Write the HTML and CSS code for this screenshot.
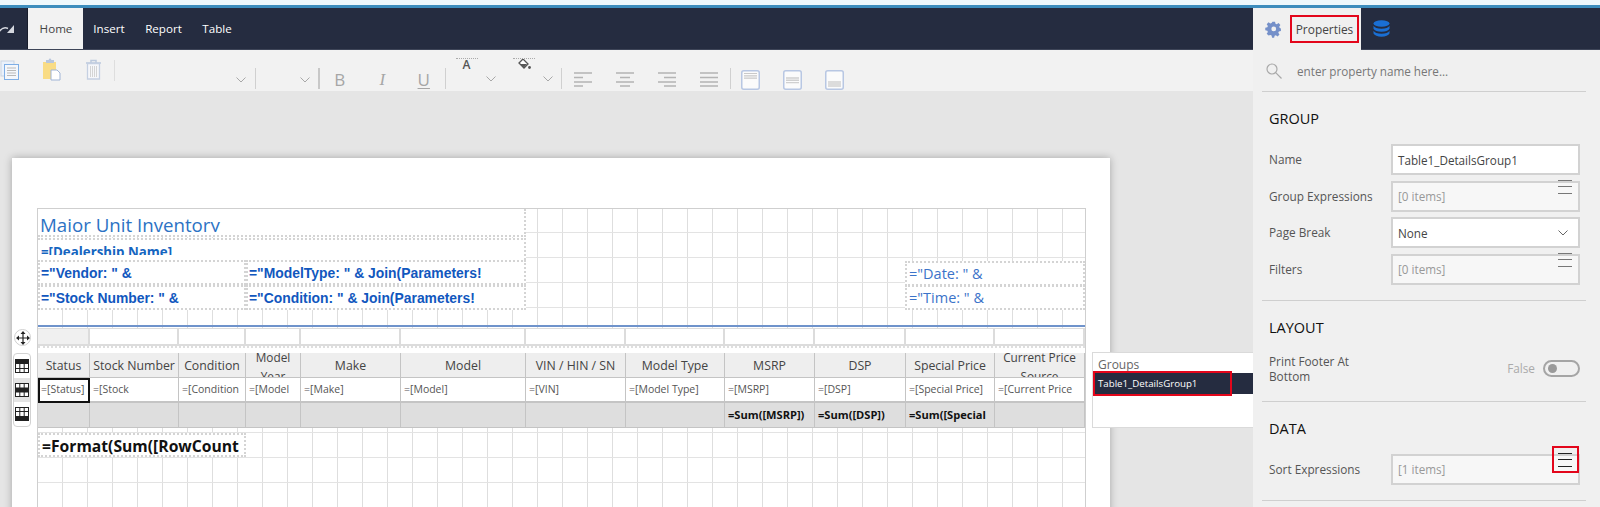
FILE: index.html
```html
<!DOCTYPE html>
<html lang="en">
<head>
<meta charset="utf-8">
<title>Report Designer</title>
<link rel="stylesheet" href="styles.css">
</head>
<body>
<div class="strip"></div>
<header class="nav">
  <div class="nav-left">
    <span class="redo"><svg width="16" height="12" viewBox="0 0 16 12"><path d="M0 9Q4 3 9 5.500" fill="none" stroke="#d5d8df" stroke-width="1.400"/><path d="M15 2v8H8z" fill="#d5d8df"/></svg></span>
    <span class="tab tab-home">Home</span>
    <span class="tab">Insert</span>
    <span class="tab">Report</span>
    <span class="tab">Table</span>
  </div>
  <div class="nav-right">
    <div class="prop-tab">
      <svg class="gear" width="17" height="17" viewBox="0 0 24 24"><path fill="#7590c9" d="M10 1h4l.7 3.200 1.900.8 2.800-1.800 2.800 2.800-1.800 2.800.8 1.900L23 11.400v4l-3.200.7-.8 1.900 1.800 2.800-2.800 2.800-2.800-1.800-1.900.8-.7 3H9.400l-.7-3.200-1.900-.8L4 22.400 1.200 19.600 3 16.800l-.8-1.900L-1 14.200v-4l3.200-.7.8-1.900L1.200 4.800 4 2 6.800 3.800 8.700 3zM12 8.500a3.700 3.700 0 1 0 0 7.400 3.700 3.700 0 0 0 0-7.400z" transform="translate(1.300 0) scale(.92)"/></svg>
      <span class="prop-label">Properties</span>
    </div>
    <svg class="db" width="17" height="17" viewBox="0 0 17 17"><g fill="#1a6fd4"><ellipse cx="8.500" cy="3.500" rx="8" ry="3.300"/><path d="M.5 5.800c1 2 4 3 8 3s7-1 8-3v3c-1 2-4 3-8 3s-7-1-8-3z"/><path d="M.5 10.800c1 2 4 3 8 3s7-1 8-3v2.700c-1 2-4 3.200-8 3.200s-7-1.200-8-3.200z"/></g></svg>
  </div>
</header>
<div class="main">
  <div class="work">
    <div class="toolbar">
      <div class="cell up first"><svg width="19" height="20" viewBox="0 0 19 20"><rect x="1" y="1" width="13" height="15" fill="#eaf1fb" stroke="#c9d3e2"/><rect x="4.500" y="4.500" width="14" height="15" fill="#f4f7fc" stroke="#7eaee6"/><path d="M7 8h9M7 10.500h9M7 13h9M7 15.500h9" stroke="#b9b9b9"/></svg></div>
      <div class="cell up"><svg width="19" height="23" viewBox="0 0 19 23"><path d="M1 4h13v17H1z" fill="#f9dc85"/><path d="M4 4V2h2.500l1-1.500h1l1 1.500H12v3H4z" fill="#b8c6dd"/><path d="M9 12h6l3 3v7H9z" fill="#fff" stroke="#9fb4d6"/></svg></div>
      <div class="cell up"><svg width="17" height="21" viewBox="0 0 17 21"><path d="M1 4h15M6 4V1.500h5V4" fill="none" stroke="#bcc9dd" stroke-width="1.500"/><path d="M2.500 4.500h12V20h-12z" fill="#f6f7fa" stroke="#c5d0e2" stroke-width="1.300"/><path d="M5.500 7v11M7.500 7v11M9.500 7v11M11.500 7v11" stroke="#d4d4d4"/></svg></div>
      <div class="sep sep-top"></div>
      <div class="cell low dd dd-font"><svg class="chev" width="10" height="6" viewBox="0 0 10 6"><path d="M.5.500 5 5 9.500.500" fill="none" stroke="#a8a8a8"/></svg></div>
      <div class="sep"></div>
      <div class="cell low dd dd-size"><svg class="chev" width="10" height="6" viewBox="0 0 10 6"><path d="M.5.500 5 5 9.500.500" fill="none" stroke="#a8a8a8"/></svg></div>
      <div class="sep sep-wide"></div>
      <div class="cell low fmt fmt-b">B</div>
      <div class="cell low fmt fmt-i">I</div>
      <div class="cell low fmt fmt-u">U</div>
      <div class="sep"></div>
      <div class="colorbtn">
        <span class="swatch">A</span>
        <svg class="chev chev-color" width="10" height="6" viewBox="0 0 10 6"><path d="M.5.500 5 5 9.500.500" fill="none" stroke="#a8a8a8"/></svg>
      </div>
      <div class="colorbtn">
        <span class="swatch"><svg width="13" height="11" viewBox="0 0 13 11"><path d="M5 0l5 5-4 4-5-5z" fill="#fff" stroke="#555" stroke-width="1.300"/><path d="M2 5h7L6 8.500z" fill="#555"/><circle cx="11.500" cy="8.500" r="1.400" fill="#555"/></svg></span>
        <svg class="chev chev-color" width="10" height="6" viewBox="0 0 10 6"><path d="M.5.500 5 5 9.500.500" fill="none" stroke="#a8a8a8"/></svg>
      </div>
      <div class="sep"></div>
      <div class="cell low"><svg width="18" height="15" viewBox="0 0 18 15"><path d="M0 1h18M0 5.500h9M0 10h18M0 14h9" stroke="#b4b4b4" stroke-width="1.500"/></svg></div>
      <div class="cell low"><svg width="18" height="15" viewBox="0 0 18 15"><path d="M0 1h18M4 5.500h10M0 10h18M4 14h10" stroke="#b4b4b4" stroke-width="1.500"/></svg></div>
      <div class="cell low"><svg width="18" height="15" viewBox="0 0 18 15"><path d="M0 1h18M6 5.500h12M0 10h18M6 14h12" stroke="#b4b4b4" stroke-width="1.500"/></svg></div>
      <div class="cell low"><svg width="18" height="15" viewBox="0 0 18 15"><path d="M0 1h18M0 5.500h18M0 10h18M0 14h18" stroke="#b4b4b4" stroke-width="1.500"/></svg></div>
      <div class="sep sep-last"></div>
      <div class="cell low"><svg width="19" height="20" viewBox="0 0 19 20"><rect x=".75" y=".75" width="17.500" height="18.500" rx="2" fill="#fbfbfb" stroke="#b8c7e3" stroke-width="1.500"/><path d="M3 3.500h13M3 5.800h13M3 8.100h13" stroke="#c9c9c9" stroke-width="1.200"/></svg></div>
      <div class="cell low"><svg width="19" height="20" viewBox="0 0 19 20"><rect x=".75" y=".75" width="17.500" height="18.500" rx="2" fill="#fbfbfb" stroke="#b8c7e3" stroke-width="1.500"/><path d="M3 8h13M3 10.300h13M3 12.600h13" stroke="#d0d0d0" stroke-width="1.400"/></svg></div>
      <div class="cell low"><svg width="19" height="20" viewBox="0 0 19 20"><rect x=".75" y=".75" width="17.500" height="18.500" rx="2" fill="#fbfbfb" stroke="#b8c7e3" stroke-width="1.500"/><path d="M3 11h13v6H3z" fill="#dcdcdc"/></svg></div>
    </div>
    <div class="canvas">
      <div class="page">
        <div class="surface">
          <div class="item it-title"><span class="clip clip-title">Major Unit Inventory</span></div>
          <div class="item it-dealer"><span class="clip clip-dealer">=[Dealership Name]</span></div>
          <div class="item it-bold it-vendor">="Vendor: " &amp;</div>
          <div class="item it-bold it-modeltype">="ModelType: " &amp; Join(Parameters!</div>
          <div class="item it-bold it-stock">="Stock Number: " &amp;</div>
          <div class="item it-bold it-condition">="Condition: " &amp; Join(Parameters!</div>
          <div class="item it-date it-date1">="Date: " &amp;</div>
          <div class="item it-date it-date2">="Time: " &amp;</div>
          <div class="section-line"></div>
          <div class="col-handles">
            <i class="grey"></i><i></i><i></i><i></i><i></i><i></i><i></i><i></i><i></i><i></i><i></i><i></i>
          </div>
          <div class="dots-line"></div>
          <div class="rtable">
            <div class="c h">Status</div><div class="c h">Stock Number</div><div class="c h">Condition</div><div class="c h two">Model Year</div><div class="c h">Make</div><div class="c h">Model</div><div class="c h">VIN / HIN / SN</div><div class="c h">Model Type</div><div class="c h">MSRP</div><div class="c h">DSP</div><div class="c h">Special Price</div><div class="c h two">Current Price Source</div>
            <div class="c d sel">=[Status]</div><div class="c d">=[Stock<br>Number]</div><div class="c d">=[Condition<br>]</div><div class="c d">=[Model<br>Year]</div><div class="c d">=[Make]</div><div class="c d">=[Model]</div><div class="c d">=[VIN]</div><div class="c d">=[Model Type]</div><div class="c d">=[MSRP]</div><div class="c d">=[DSP]</div><div class="c d">=[Special Price]</div><div class="c d">=[Current Price<br>Source]</div>
            <div class="c f"></div><div class="c f"></div><div class="c f"></div><div class="c f"></div><div class="c f"></div><div class="c f"></div><div class="c f"></div><div class="c f"></div><div class="c f">=Sum([MSRP])</div><div class="c f">=Sum([DSP])</div><div class="c f">=Sum([Special<br>Price])</div><div class="c f"></div>
          </div>
          <div class="item it-format">=Format(Sum([RowCount</div>
        </div>
      </div>
      <div class="move-btn"><svg width="14" height="14" viewBox="0 0 14 14"><path d="M7 0 9.500 3h-5zM7 14 4.500 11h5zM0 7l3-2.500v5zM14 7l-3 2.500v-5z" fill="#222"/><path d="M7 2v10M2 7h10" stroke="#222" stroke-width="1.200"/></svg></div>
      <div class="row-btns">
        <span class="row-btn"><svg width="14" height="14" viewBox="0 0 14 14"><rect x=".5" y=".5" width="13" height="13" fill="#fff" stroke="#222"/><rect x="0" y="0" width="14" height="5" fill="#222"/><path d="M0 9.500h14M4.800 5v9M9.200 5v9" stroke="#222"/></svg></span>
        <span class="row-btn row-btn-on"><svg width="14" height="14" viewBox="0 0 14 14"><rect x=".5" y=".5" width="13" height="13" fill="#fff" stroke="#222"/><rect x="0" y="4.500" width="14" height="5" fill="#222"/><path d="M4.800 0v14M9.200 0v14" stroke="#222"/></svg></span>
        <span class="row-btn"><svg width="14" height="14" viewBox="0 0 14 14"><rect x=".5" y=".5" width="13" height="13" fill="#fff" stroke="#222"/><rect x="0" y="9" width="14" height="5" fill="#222"/><path d="M0 4.500h14M4.800 0v9M9.200 0v9" stroke="#222"/></svg></span>
      </div>
      <div class="groups">
        <div class="groups-title">Groups</div>
        <div class="groups-row"><span class="groups-name">Table1_DetailsGroup1</span></div>
      </div>
    </div>
  </div>
  <aside class="panel">
    <div class="search">
      <svg width="16" height="16" viewBox="0 0 16 16"><circle cx="6" cy="6" r="5" fill="none" stroke="#a9a9a9" stroke-width="1.200"/><path d="M9.700 9.700 15.500 15.500" stroke="#a9a9a9" stroke-width="1.200"/></svg>
      <span class="search-text">enter property name here...</span>
    </div>
    <section class="sec">
      <h2 class="sec-title">GROUP</h2>
      <div class="row"><label class="lbl">Name</label><div class="inp">Table1_DetailsGroup1</div></div>
      <div class="row"><label class="lbl">Group Expressions</label><div class="inp inp-off">[0 items]<span class="burger"><i></i><i></i><i></i></span></div></div>
      <div class="row"><label class="lbl">Page Break</label><div class="inp">None<svg class="sel-chev" width="10" height="6" viewBox="0 0 10 6"><path d="M.5.500 5 5 9.500.500" fill="none" stroke="#666"/></svg></div></div>
      <div class="row"><label class="lbl">Filters</label><div class="inp inp-off">[0 items]<span class="burger"><i></i><i></i><i></i></span></div></div>
    </section>
    <section class="sec">
      <h2 class="sec-title">LAYOUT</h2>
      <div class="row row-toggle"><label class="lbl">Print Footer At Bottom</label><div class="toggle-wrap"><span class="false">False</span><span class="toggle"><b></b></span></div></div>
    </section>
    <section class="sec">
      <h2 class="sec-title">DATA</h2>
      <div class="row"><label class="lbl">Sort Expressions</label><div class="inp inp-off">[1 items]<span class="burger burger-dark"><i></i><i></i><i></i></span><span class="red-sq"></span></div></div>
    </section>
  </aside>
</div>
</body>
</html>
```
FILE: styles.css
```css
* { box-sizing: border-box; }
html, body { margin: 0; padding: 0; height: 507px; overflow: hidden; }
body { font-family: "Open Sans", "Noto Sans", sans-serif; font-size: 12px; color: #333; background: #e5e5e5; }

.strip { height: 8px; background: #eef8fc; border-bottom: 3px solid #3d8dbd; }

.nav { height: 42px; background: #252c40; border-bottom: 1px solid #3e4558; display: flex; justify-content: space-between; color: #fff; }
.nav-left { display: flex; align-items: stretch; }
.redo { width: 28px; display: flex; align-items: center; justify-content: flex-end; padding-right: 12px; border-right: 1px solid #181d2c; }
.redo svg { margin-left: -6px; flex: none; }
.tab { display: flex; align-items: center; padding: 0 10.300px; font-size: 11.600px; }
.tab-home { background: #f2f2f2; color: #444; width: 55px; justify-content: center; padding: 0 0 0 1px; }
.nav-right { width: 347px; display: flex; align-items: center; }
.prop-tab { width: 108px; height: 42px; background: #f0f0f0; color: #444; display: flex; align-items: center; padding-left: 12px; margin-bottom: -1px; position: relative; }
.prop-label { margin-left: 8px; width: 69px; height: 28px; border: 2px solid #e3061b; display: flex; align-items: center; justify-content: center; font-size: 11.900px; white-space: nowrap; }
.db { margin-left: 12px; }

.main { display: flex; height: 457px; }
.work { width: 1253px; display: flex; flex-direction: column; }

.toolbar { height: 41px; background: #f2f2f2; display: flex; flex: none; }
.cell { width: 42px; height: 41px; display: flex; align-items: center; justify-content: center; flex: none; }
.first { margin-left: -12px; }
.up { padding-bottom: 2px; }
.low { padding-top: 18px; }
.sep { width: 1px; height: 21px; background: #d0d0d0; margin-top: 18px; flex: none; }
.sep-top { margin-top: 10px; background: #dedede; }
.sep-wide { width: 2px; background: #c8c8c8; }
.sep-last { margin-right: -1px; }
.dd { justify-content: flex-end; }
.dd-font { width: 140px; padding-right: 9px; }
.dd-size { width: 62px; padding-right: 8px; }
.fmt { color: #a6a6a6; font-size: 17px; width: 41.500px; }
.fmt-b { padding-right: 2px; }
.fmt-i { font-family: "Liberation Serif", serif; font-style: italic; }
.fmt-u { text-decoration: underline; text-underline-offset: 2px; }
.colorbtn { width: 57.500px; height: 41px; display: flex; padding: 8px 0 0 10px; flex: none; }
.swatch { width: 22px; height: 12px; border-top: 1px dotted #aaa; display: flex; justify-content: center; align-items: center; font-size: 12px; line-height: 12px; font-weight: 600; color: #555; }
.chev-color { margin: 18px 0 0 8px; }

.canvas { flex: 1; position: relative; padding: 67px 0 0 12px; overflow: hidden; }
.page { width: 1098px; height: 400px; background: #fff; box-shadow: 0 0 8px rgba(0,0,0,.28); padding: 50px 24px 0 25px; }
.surface {
  position: relative; width: 1049px; height: 340px; border: 1px solid #cfcfcf;
  background-color: #fff;
  background-image: linear-gradient(#e3e3e3 1px, transparent 1px), linear-gradient(90deg, #dedede 1px, transparent 1px);
  background-size: 25px 25px;
  background-position: 0 23px, 24px 0;
}

.item { position: absolute; background: #fff; border: 2px dotted #d4d4d4; overflow: hidden; white-space: nowrap; }
.clip { display: block; overflow: hidden; }
.it-title { left: 0; top: 0; width: 488px; height: 28px; border-width: 0 2px 2px 0; padding-left: 2px; }
.clip-title { height: 23px; font-size: 18.700px; line-height: 32px; color: #2c72c4; }
.it-dealer { left: 0; top: 29px; width: 488px; height: 22px; border-width: 2px 2px 0 0; padding-left: 3px; }
.clip-dealer { height: 15px; font-weight: 700; font-size: 13.300px; line-height: 24px; color: #1565c0; }
.it-bold { font-family: "Liberation Sans", sans-serif; font-weight: 700; font-size: 13.900px; color: #1157be; padding-left: 1px; line-height: 22px; height: 25px; }
.it-vendor { left: 0; top: 51px; width: 208px; }
.it-modeltype { left: 208px; top: 51px; width: 280px; }
.it-stock { left: 0; top: 76px; width: 208px; }
.it-condition { left: 208px; top: 76px; width: 280px; }
.it-date { left: 867px; width: 180px; height: 25px; padding-left: 2px; font-size: 14.500px; line-height: 22px; color: #3b73c9; }
.it-date1 { top: 52px; }
.it-date2 { top: 76px; }
.it-format { left: 0; top: 224px; width: 208px; height: 24px; padding-left: 2px; font-weight: 700; font-size: 15.700px; line-height: 22px; color: #111; }

.section-line { position: absolute; left: 0; right: 0; top: 116px; height: 2px; background: #6f93cb; }
.col-handles { position: absolute; left: 0; right: 0; top: 119px; height: 18px; display: grid; grid-template-columns: 52px 89px 67px 55px 100px 125px 100px 99px 90px 91px 89px 90px; background: #fff; }
.col-handles i { border: 1px solid #dcdcdc; border-width: 1px 2px 2px 0; background: #fff; }
.col-handles i:first-child { border-left: 0; }
.col-handles .grey { background: #f0f0f0; }
.dots-line { position: absolute; left: 0; right: 0; top: 137px; height: 7px; background: #fff; border-top: 2px dotted #dedede; }

.rtable { position: absolute; left: 0; top: 144px; width: 1047px; display: grid; grid-template-columns: 52px 89px 67px 55px 100px 125px 100px 99px 90px 91px 89px 90px; grid-template-rows: 25px 25px 25px; background: #fff; }
.c { border-right: 1px solid #c4c4c4; border-bottom: 1px solid #c4c4c4; overflow: hidden; color: #444; }
.h { background: #eeeeee; font-size: 12.300px; display: flex; align-items: center; justify-content: center; text-align: center; line-height: 15px; padding: 0 2px; }
.two { font-size: 11.800px; line-height: 19px; padding-top: 4px; }
.d { background: #fff; font-size: 10.500px; line-height: 17px; padding: 3px 0 0 3px; color: #555; border-bottom-width: 2px; white-space: nowrap; }
.sel { outline: 2px solid #111; outline-offset: -2px; }
.f { background: #dedede; font-size: 11.100px; font-weight: 700; line-height: 17px; padding: 3px 0 0 3px; color: #111; white-space: nowrap; }

.move-btn { position: absolute; left: 14px; top: 238px; width: 17px; height: 17px; border-radius: 50%; background: #fff; border: 1px solid #cfcfcf; display: flex; align-items: center; justify-content: center; }
.row-btns { position: absolute; left: 13px; top: 262px; width: 18px; height: 74px; background: #fff; border: 1px solid #d2d2d2; border-radius: 4px; display: flex; flex-direction: column; overflow: hidden; }
.row-btn { height: 24px; display: flex; align-items: center; justify-content: center; flex: 1; }
.row-btn-on { background: #e4e4e4; }

.groups { position: absolute; left: 1092px; top: 261px; width: 161px; height: 76px; background: #fff; border: 1px solid #dadada; border-right: 0; }
.groups-title { font-size: 12px; line-height: 14px; color: #666; padding: 5px 0 0 5px; height: 20px; }
.groups-row { height: 21px; background: #252c40; margin-left: 2px; position: relative; }
.groups-name { position: absolute; left: -2px; top: -2px; width: 139px; height: 25px; border: 2px solid #e3061b; color: #fff; font-size: 9.700px; line-height: 21px; padding-left: 3px; white-space: nowrap; }

.panel { width: 347px; background: #f0f0f0; padding: 0 14px 0 9px; }
.search { height: 42px; border-bottom: 1px solid #cfcfcf; display: flex; align-items: center; padding: 0 0 0 4px; }
.search-text { margin-left: 15px; color: #777; font-size: 11.700px; }
.sec { border-bottom: 1px solid #cfcfcf; padding: 17px 6px 15.500px 7px; }
.sec-title { margin: 0 0 15px; font-size: 14.500px; line-height: 20px; font-weight: 400; color: #111; }
.row { display: flex; align-items: center; margin-bottom: 5.500px; }
.row:last-child { margin-bottom: 0; }
.lbl { width: 122px; flex: none; font-size: 11.800px; line-height: 15px; color: #555; }
.inp { position: relative; width: 189px; height: 31px; border: 2px solid #d2d2d2; background: #fff; padding-left: 5px; display: flex; align-items: center; font-size: 11.700px; color: #444; white-space: nowrap; }
.inp-off { background: #f7f7f7; color: #999; }
.burger { position: absolute; right: 6px; top: -3px; width: 14px; display: flex; flex-direction: column; gap: 5.500px; }
.burger i { height: 1px; background: #777; display: block; }
.burger-dark i { background: #222; }
.sel-chev { position: absolute; right: 10px; top: 11px; }
.red-sq { position: absolute; right: -1px; top: -10px; width: 27px; height: 27px; border: 2px solid #e3061b; }
.row-toggle { height: 32px; justify-content: space-between; }
.toggle-wrap { display: flex; align-items: center; margin-top: -2px; }
.row-toggle .lbl { width: 110px; }
.false { font-size: 11.800px; color: #aaa; margin-right: 8px; }
.toggle { width: 37px; height: 17px; border: 2px solid #a5a5a5; border-radius: 9px; background: #f0f0f0; padding: 2px 0 0 3px; display: block; }
.toggle b { display: block; width: 9px; height: 9px; border-radius: 50%; background: #9a9a9a; }
```
